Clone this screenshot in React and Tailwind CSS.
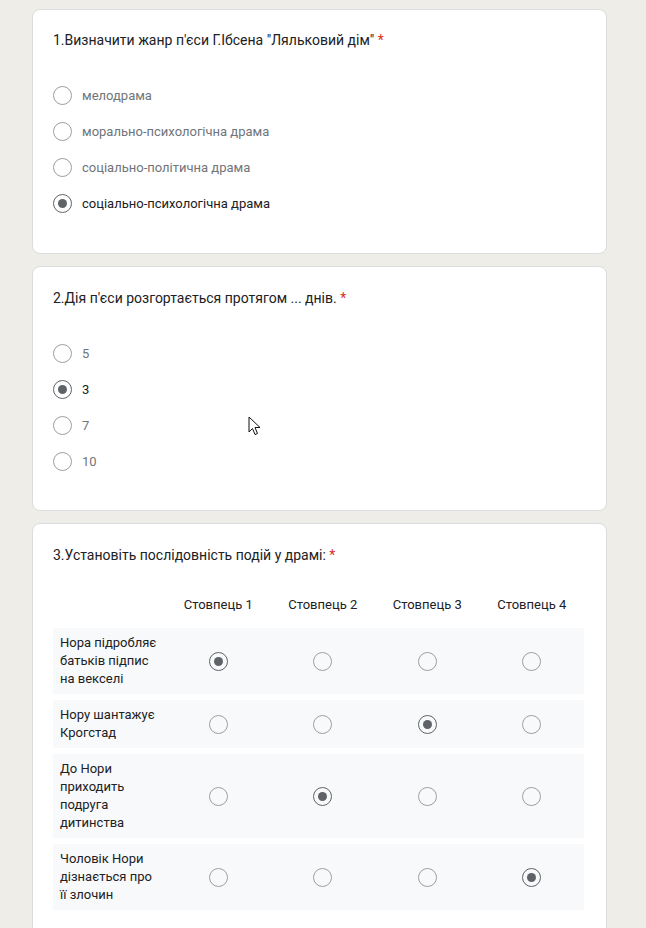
import React from "react";

const q1 = ["мелодрама", "морально-психологічна драма", "соціально-політична драма", "соціально-психологічна драма"];
const q2 = ["5", "3", "7", "10"];
const rows = [
  { text: "Нора підробляє батьків підпис на векселі", pick: 0 },
  { text: "Нору шантажує Крогстад", pick: 2 },
  { text: "До Нори приходить подруга дитинства", pick: 1 },
  { text: "Чоловік Нори дізнається про її злочин", pick: 3 },
];

const Radio = ({ on }) => (
  <span
    className={
      "flex h-[19px] w-[19px] shrink-0 items-center justify-center rounded-full border-[1.5px] " +
      (on ? "border-[#5f6368]" : "border-[#9e9e9e]")
    }
  >
    {on && <span className="h-[9px] w-[9px] rounded-full bg-[#5f6368]" />}
  </span>
);

const Title = ({ children }) => (
  <div className="text-[14px] leading-[20px] text-[#202124]">
    {children} <span className="text-[#d93025]">*</span>
  </div>
);

const Choices = ({ items, picked }) => (
  <div className="mt-[36px] flex flex-col gap-[17px]">
    {items.map((t, i) => (
      <div key={i} className="flex h-[19px] items-center gap-[10px]">
        <Radio on={i === picked} />
        <span className={"text-[13px] " + (i === picked ? "text-[#202124]" : "text-[#70757a]")}>{t}</span>
      </div>
    ))}
  </div>
);

export default function App() {
  return (
    <div className="relative h-[928px] overflow-hidden bg-[#efede8] px-[32px] pt-[9px] font-['Roboto',sans-serif]" style={{ width: 646 }}>
      <div className="w-[575px] flex flex-col gap-[12px]">
        <div className="h-[245px] rounded-[8px] border border-[#dadce0] bg-white pl-[20px] pr-[21px] pt-[20px]">
          <Title>1.Визначити жанр п'єси Г.Ібсена "Ляльковий дім"</Title>
          <Choices items={q1} picked={3} />
        </div>
        <div className="h-[245px] rounded-[8px] border border-[#dadce0] bg-white pl-[20px] pr-[21px] pt-[21px]">
          <Title>2.Дія п'єси розгортається протягом ... днів.</Title>
          <Choices items={q2} picked={1} />
        </div>
        <div className="rounded-[8px] border border-[#dadce0] bg-white pl-[20px] pr-[21px] pt-[21px] pb-[40px]">
          <Title>3.Установіть послідовність подій у драмі:</Title>
          <div className="mt-[28px] grid grid-cols-[113px_repeat(4,1fr)] w-[531px] h-[24px] items-center text-[13px] text-[#202124]">
            <span />
            {[1, 2, 3, 4].map((n) => (
              <span key={n} className="text-center">Стовпець {n}</span>
            ))}
          </div>
          <div className="mt-[11px] flex w-[531px] flex-col gap-[6px]">
            {rows.map((r, i) => (
              <div key={i} className="grid grid-cols-[113px_repeat(4,1fr)] items-center bg-[#f8f9fa] py-[6px]">
                <span className="pl-[7px] pr-[7px] text-[13px] leading-[18px] text-[#202124]">{r.text}</span>
                {[0, 1, 2, 3].map((c) => (
                  <span key={c} className="flex justify-center">
                    <Radio on={c === r.pick} />
                  </span>
                ))}
              </div>
            ))}
          </div>
        </div>
      </div>
      <svg className="absolute left-[248px] top-[416px]" width="14" height="21" viewBox="0 0 14 21">
        <path d="M1 1 L1 16 L4.5 12.5 L7 18.5 L9.5 17.5 L7 11.5 L12 11.5 Z" fill="white" stroke="#111" strokeWidth="1" strokeLinejoin="round" />
      </svg>
    </div>
  );
}
